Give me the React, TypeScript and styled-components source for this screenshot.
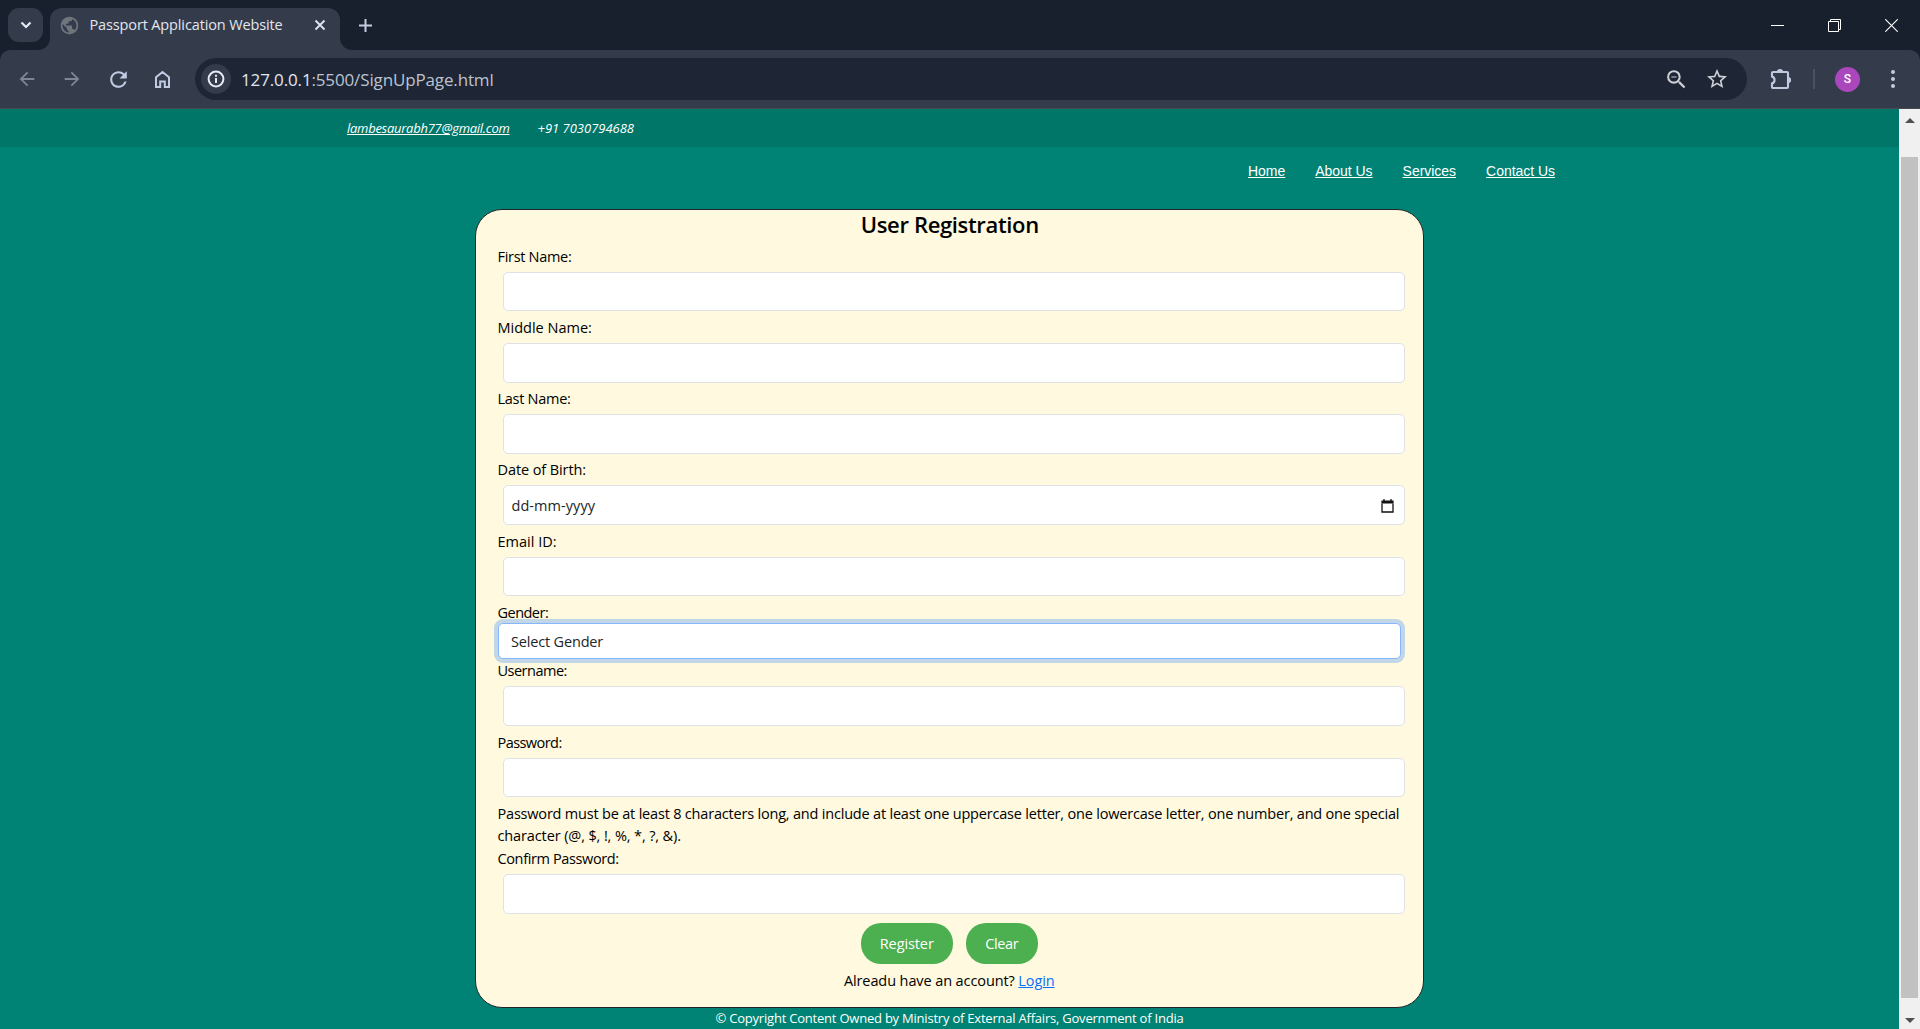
import React from "react";
import styled, { createGlobalStyle, css } from "styled-components";
import { MdArrowBack, MdArrowForward, MdRefresh, MdPublic, MdStarBorder, MdOutlineZoomOut } from "react-icons/md";

const GlobalStyle = createGlobalStyle`
  *, *::before, *::after { box-sizing: border-box; }
  html, body { margin: 0; padding: 0; }
  body { overflow: hidden; font-family: "Open Sans", "Noto Sans", sans-serif; }
  svg { display: block; flex: none; }
`;

const tracked = css<{ $ls?: number }>`
  letter-spacing: ${({ $ls = 0 }) => $ls}px;
  white-space: nowrap;
`;

const Window = styled.div`
  width: 1920px;
  height: 1029px;
  display: flex;
  flex-direction: column;
  overflow: hidden;
  background: #18202e;
`;

/* ---------- tab strip ---------- */

const TabStrip = styled.header`
  height: 50px;
  display: flex;
  padding: 8px 22px 0 8px;
`;

const TabSearch = styled.button`
  width: 35px;
  height: 34px;
  margin-right: 7px;
  padding: 0;
  border: 0;
  border-radius: 11px;
  background: #343b4b;
  display: grid;
  place-items: center;
`;

const Tab = styled.div`
  position: relative;
  width: 290px;
  height: 42px;
  padding: 0 14px 8px 9px;
  display: flex;
  align-items: center;
  border-radius: 12px 12px 0 0;
  background: #343b4b;

  &::before,
  &::after {
    content: "";
    position: absolute;
    bottom: 0;
    width: 12px;
    height: 12px;
  }
  &::before {
    left: -12px;
    background: radial-gradient(circle at 0 0, transparent 11.5px, #343b4b 12.5px);
  }
  &::after {
    right: -12px;
    background: radial-gradient(circle at 100% 0, transparent 11.5px, #343b4b 12.5px);
  }
`;

const TabTitle = styled.span`
  ${tracked}
  flex: 1;
  margin-left: 9.5px;
  font-size: 14.5px;
  line-height: 20px;
  color: #e3e6ee;
`;

const NewTab = styled.div`
  height: 34px;
  margin-left: 19px;
  display: flex;
  align-items: center;
`;

const WindowButtons = styled.div`
  height: 34px;
  margin-left: auto;
  display: flex;
  align-items: center;
  gap: 44px;
`;

/* ---------- toolbar ---------- */

const Toolbar = styled.nav`
  height: 59px;
  display: flex;
  align-items: center;
  padding: 0 19px 0 16px;
  border-bottom: 1px solid #46494e;
  border-radius: 10px 10px 0 0;
  background: #343b4b;
`;

const NavButtons = styled.div`
  width: 179px;
  display: flex;
  align-items: center;
  gap: 23px;
`;

const AddressBar = styled.div`
  width: 1552px;
  height: 42px;
  display: flex;
  align-items: center;
  padding: 0 18px 0 6px;
  border-radius: 21px;
  background: #1e2636;
`;

const SiteInfo = styled.span`
  width: 30px;
  height: 30px;
  border-radius: 50%;
  background: #343b4b;
  display: grid;
  place-items: center;
`;

const Url = styled.span`
  ${tracked}
  flex: 1;
  margin-left: 10px;
  padding-top: 1px;
  font-size: 17px;
  line-height: 24px;
  color: #bcc2cf;
`;

const UrlHost = styled.span`
  color: #e3e6ee;
`;

const AddressIcons = styled.div`
  display: flex;
  align-items: center;
  gap: 16px;
`;

const ToolbarActions = styled.div`
  flex: 1;
  display: flex;
  align-items: center;
  margin-left: 23px;
`;

const Divider = styled.i`
  width: 2px;
  height: 20px;
  margin: 0 20px 0 21px;
  background: #4a5366;
`;

const Avatar = styled.span`
  width: 25px;
  height: 25px;
  border-radius: 50%;
  background: #ab47bc;
  color: #fff;
  font: 500 12px/25px Roboto, sans-serif;
  text-align: center;
`;

const MenuDots = styled.div`
  margin-left: auto;
  margin-right: 6.5px;
  display: flex;
  flex-direction: column;
  gap: 3px;
`;

const MenuDot = styled.i`
  width: 4px;
  height: 4px;
  border-radius: 50%;
  background: #c0cbe2;
`;

/* ---------- web page ---------- */

const Viewport = styled.div`
  flex: 1;
  min-height: 0;
  display: flex;
`;

const Page = styled.div`
  width: 1899px;
  display: flex;
  flex-direction: column;
  align-items: center;
  background: #008374;
`;

const ContactStrip = styled.div`
  width: 100%;
  height: 38px;
  padding-left: 347px;
  display: flex;
  align-items: center;
  gap: 28px;
  background: #007668;
  color: #fff;
  font-size: 13px;
  line-height: 18px;
  font-style: italic;
`;

const MailLink = styled.a`
  ${tracked}
  text-decoration: underline;
  text-underline-offset: 1px;
`;

const Phone = styled.span`
  ${tracked}
`;

const SiteNav = styled.div`
  width: 100%;
  height: 62px;
  padding: 15px 344px 0 0;
  display: flex;
  justify-content: flex-end;
  gap: 30px;
  font: 14px/18px "Liberation Sans", Arial, sans-serif;
`;

const SiteLink = styled.a`
  ${tracked}
  color: #fff;
  text-decoration: underline;
  text-underline-offset: 1px;
`;

const Card = styled.main`
  width: 949px;
  height: 799px;
  padding: 0 22px 0 21.5px;
  border: 1px solid #212529;
  border-radius: 27px;
  background: #fef9df;
  color: #000;
  font-size: 14.5px;
  line-height: 22.5px;
`;

const Title = styled.h1`
  ${tracked}
  margin: 1px 0 6.5px 1px;
  font-size: 22px;
  line-height: 27px;
  font-weight: 600;
  text-align: center;
`;

const Label = styled.label`
  ${tracked}
  display: block;
  height: 22.5px;
  line-height: 24px;
`;

const TextBox = styled.div`
  ${tracked}
  height: 39.75px;
  margin: 4.5px -4px 4.5px 5.5px;
  padding: 2px 10px 0 7.5px;
  display: flex;
  align-items: center;
  justify-content: space-between;
  border: 1px solid #dee2e6;
  border-radius: 5px;
  background: #fff;
  color: #212529;
`;

const SelectBox = styled(TextBox)`
  height: 36px;
  margin: 0;
  padding: 2px 11px 0 12.5px;
  border-color: #86b7fe;
  box-shadow: 0 0 0 4px rgba(13, 110, 253, 0.25);
`;

const Hint = styled.p`
  ${tracked}
  height: 45px;
  margin: 0;
  padding-top: 1.2px;
`;

const HintLine = styled.span`
  ${tracked}
  display: block;
`;

const ButtonRow = styled.div`
  display: flex;
  justify-content: center;
  gap: 13px;
  margin-top: 9.2px;
`;

const PillButton = styled.button<{ $ls?: number; $w: number }>`
  ${tracked}
  width: ${({ $w }) => $w}px;
  height: 41px;
  padding: 0;
  border: 0;
  border-radius: 20px;
  background: #4caf50;
  color: #fff;
  font-family: inherit;
  font-size: 14.5px;
`;

const SignIn = styled.div`
  ${tracked}
  margin-top: 6px;
  text-align: center;
`;

const LoginLink = styled.a`
  color: #0d6efd;
  text-decoration: underline;
  text-underline-offset: 1px;
`;

const Footer = styled.footer`
  ${tracked}
  font-size: 13px;
  line-height: 20px;
  color: #fff;
`;

/* ---------- scrollbar ---------- */

const Scrollbar = styled.aside`
  width: 21px;
  display: flex;
  flex-direction: column;
  align-items: center;
  padding: 9px 0 6px;
  background: #f0f0f0;
`;

const ScrollThumb = styled.i`
  width: 17px;
  height: 841px;
  margin: 34px 0 auto;
  background: #c1c1c1;
`;

const ScrollArrow = styled.i<{ $down?: boolean }>`
  border: 5px solid transparent;
  ${({ $down }) => ($down ? "border-top-color: #505050; border-bottom: 0;" : "border-bottom-color: #505050; border-top: 0;")}
`;

/* ---------- drawings ---------- */

const ChevronIcon = () => (
  <svg width="12" height="8" viewBox="0 0 12 8" fill="none" stroke="#e6e9f2" strokeWidth="2.2">
    <path d="M1.5 1.5 6 6l4.5-4.5" />
  </svg>
);

const CloseTabIcon = () => (
  <svg width="12" height="12" viewBox="0 0 12 12" stroke="#dfe3ec" strokeWidth="1.9">
    <path d="m1.5 1.5 9 9M10.5 1.5l-9 9" />
  </svg>
);

const PlusIcon = () => (
  <svg width="13" height="13" viewBox="0 0 13 13" stroke="#c3cde0" strokeWidth="2">
    <path d="M6.5 0v13M0 6.5h13" />
  </svg>
);

const HomeIcon = () => (
  <svg width="17" height="19" viewBox="0 0 17 19" fill="none" stroke="#c0cbe2" strokeWidth="2">
    <path d="M2 17V7.2L8.5 2 15 7.2V17h-4.2v-5.6H6.2V17Z" />
  </svg>
);

const InfoIcon = () => (
  <svg width="18" height="18" viewBox="0 0 18 18" fill="none" stroke="#e6e9f2" strokeWidth="2">
    <circle cx="9" cy="9" r="7.4" />
    <path d="M9 8v5M9 4.8v2" />
  </svg>
);

const PuzzleIcon = () => (
  <svg width="22" height="22" viewBox="0 0 22 22" fill="none" stroke="#c0cbe2" strokeWidth="2.1" strokeLinejoin="round">
    <path d="M3 4h14a1 1 0 0 1 1 1v14a1 1 0 0 1-1 1H3a1 1 0 0 1-1-1v-3.6c3.4-.7 3.4-6.1 0-6.8V5a1 1 0 0 1 1-1Z" />
    <path d="M6.9 4a3 3 0 0 1 6.2 0ZM18 8.9a3 3 0 0 1 0 6.2Z" fill="#c0cbe2" stroke="none" />
  </svg>
);

const MinimizeIcon = () => (
  <svg width="13" height="13" viewBox="0 0 13 13" stroke="#fff">
    <path d="M0 6.5h13" />
  </svg>
);

const RestoreIcon = () => (
  <svg width="13" height="13" viewBox="0 0 13 13" fill="none" stroke="#fff">
    <path d="M.5 2.5h10v10H.5ZM2.5 2.5v-2h10v10h-2" />
  </svg>
);

const CloseWindowIcon = () => (
  <svg width="13" height="13" viewBox="0 0 13 13" stroke="#fff" strokeWidth="1.1">
    <path d="M.3.3l12.4 12.4M12.7.3L.3 12.7" />
  </svg>
);

const CalendarIcon = () => (
  <svg width="13" height="14" viewBox="0 0 13 14" fill="none" stroke="#111">
    <path d="M1 4.5V13h11V4.5" strokeWidth="1.3" />
    <path d="M.4 3h12.2" strokeWidth="3" />
    <path d="M3 0v2M10 0v2" strokeWidth="1.3" />
  </svg>
);

/* ---------- content ---------- */

type Field = { label: string; ls: number; kind?: "date" | "select" };

const beforeHint: Field[] = [
  { label: "First Name:", ls: -0.3 },
  { label: "Middle Name:", ls: 0 },
  { label: "Last Name:", ls: -0.28 },
  { label: "Date of Birth:", ls: -0.1, kind: "date" },
  { label: "Email ID:", ls: 0 },
  { label: "Gender:", ls: -0.52, kind: "select" },
  { label: "Username:", ls: -0.5 },
  { label: "Password:", ls: -0.56 },
];

const siteLinks = ["Home", "About Us", "Services", "Contact Us"];

const FormField = ({ label, ls, kind }: Field) => (
  <>
    <Label $ls={ls}>{label}</Label>
    {kind === "select" ? (
      <SelectBox $ls={-0.17}>Select Gender</SelectBox>
    ) : kind === "date" ? (
      <TextBox $ls={0.06}>
        dd-mm-yyyy
        <CalendarIcon />
      </TextBox>
    ) : (
      <TextBox />
    )}
  </>
);

export default function App() {
  return (
    <Window>
      <GlobalStyle />
      <TabStrip>
        <TabSearch aria-label="Search tabs">
          <ChevronIcon />
        </TabSearch>
        <Tab>
          <MdPublic size={21} color="#70757c" />
          <TabTitle $ls={-0.135}>Passport Application Website</TabTitle>
          <CloseTabIcon />
        </Tab>
        <NewTab>
          <PlusIcon />
        </NewTab>
        <WindowButtons>
          <MinimizeIcon />
          <RestoreIcon />
          <CloseWindowIcon />
        </WindowButtons>
      </TabStrip>

      <Toolbar>
        <NavButtons>
          <MdArrowBack size={22} color="#7d8597" />
          <MdArrowForward size={22} color="#7d8597" />
          <MdRefresh size={25} color="#c0cbe2" />
          <HomeIcon />
        </NavButtons>
        <AddressBar>
          <SiteInfo>
            <InfoIcon />
          </SiteInfo>
          <Url $ls={-0.14}>
            <UrlHost>127.0.0.1</UrlHost>:5500/SignUpPage.html
          </Url>
          <AddressIcons>
            <MdOutlineZoomOut size={25} color="#cfd0d6" />
            <MdStarBorder size={24} color="#cfd0d6" />
          </AddressIcons>
        </AddressBar>
        <ToolbarActions>
          <PuzzleIcon />
          <Divider />
          <Avatar>S</Avatar>
          <MenuDots>
            <MenuDot />
            <MenuDot />
            <MenuDot />
          </MenuDots>
        </ToolbarActions>
      </Toolbar>

      <Viewport>
        <Page>
          <ContactStrip>
            <MailLink $ls={-0.27}>lambesaurabh77@gmail.com</MailLink>
            <Phone $ls={-0.02}>+91 7030794688</Phone>
          </ContactStrip>
          <SiteNav>
            {siteLinks.map((link) => (
              <SiteLink key={link} $ls={-0.03}>
                {link}
              </SiteLink>
            ))}
          </SiteNav>
          <Card>
            <Title $ls={-0.34}>User Registration</Title>
            {beforeHint.map((field) => (
              <FormField key={field.label} {...field} />
            ))}
            <Hint>
              <HintLine $ls={-0.195}>
                Password must be at least 8 characters long, and include at least one uppercase letter, one lowercase
                letter, one number, and one special
              </HintLine>
              <HintLine $ls={-0.12}>character (@, $, !, %, *, ?, &amp;).</HintLine>
            </Hint>
            <FormField label="Confirm Password:" ls={-0.37} />
            <ButtonRow>
              <PillButton $w={92} $ls={-0.1}>
                Register
              </PillButton>
              <PillButton $w={72} $ls={-0.38}>
                Clear
              </PillButton>
            </ButtonRow>
            <SignIn $ls={-0.1}>
              Alreadu have an account? <LoginLink>Login</LoginLink>
            </SignIn>
          </Card>
          <Footer $ls={-0.216}>
            © Copyright Content Owned by Ministry of External Affairs, Government of India
          </Footer>
        </Page>
        <Scrollbar>
          <ScrollArrow />
          <ScrollThumb />
          <ScrollArrow $down />
        </Scrollbar>
      </Viewport>
    </Window>
  );
}
